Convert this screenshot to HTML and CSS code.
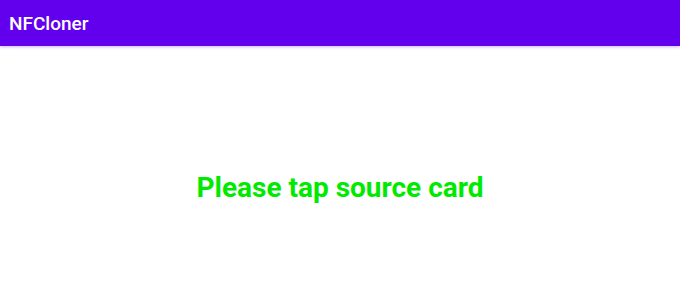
FILE: index.html
```html
<!DOCTYPE html>
<html lang="en">
<head>
    <meta charset="UTF-8">
    <meta name="viewport" content="width=device-width, initial-scale=1.0">
    <title>NFCloner</title>
    <link rel="stylesheet" href="styles.css">
</head>
<body>
    <header class="toolbar">
        <span class="toolbar-title">NFCloner</span>
    </header>

    <main class="content">
        <p class="status">Please tap source card</p>
    </main>
</body>
</html>
```

FILE: styles.css
```css
/* Reset the default page spacing */
body {
  margin: 0;
  font-family: Roboto, "Noto Sans", sans-serif;
  background-color: #ffffff;
}

/* App bar across the top */
.toolbar {
  height: 46px;
  background-color: #6200ee;
  display: flex;
  align-items: center;
  padding-left: 9px;
  box-shadow: 0 1px 3px rgba(98, 0, 238, 0.3);
}

.toolbar-title {
  color: #ffffff;
  font-size: 19px;
  font-weight: 500;
}

/* Area under the app bar */
.content {
  height: 254px;
  display: flex;
  justify-content: center;
  align-items: center;
  padding-top: 28px;
  box-sizing: border-box;
}

.status {
  margin: 0;
  color: #00ea00;
  font-size: 28px;
  font-weight: 700;
}
```
